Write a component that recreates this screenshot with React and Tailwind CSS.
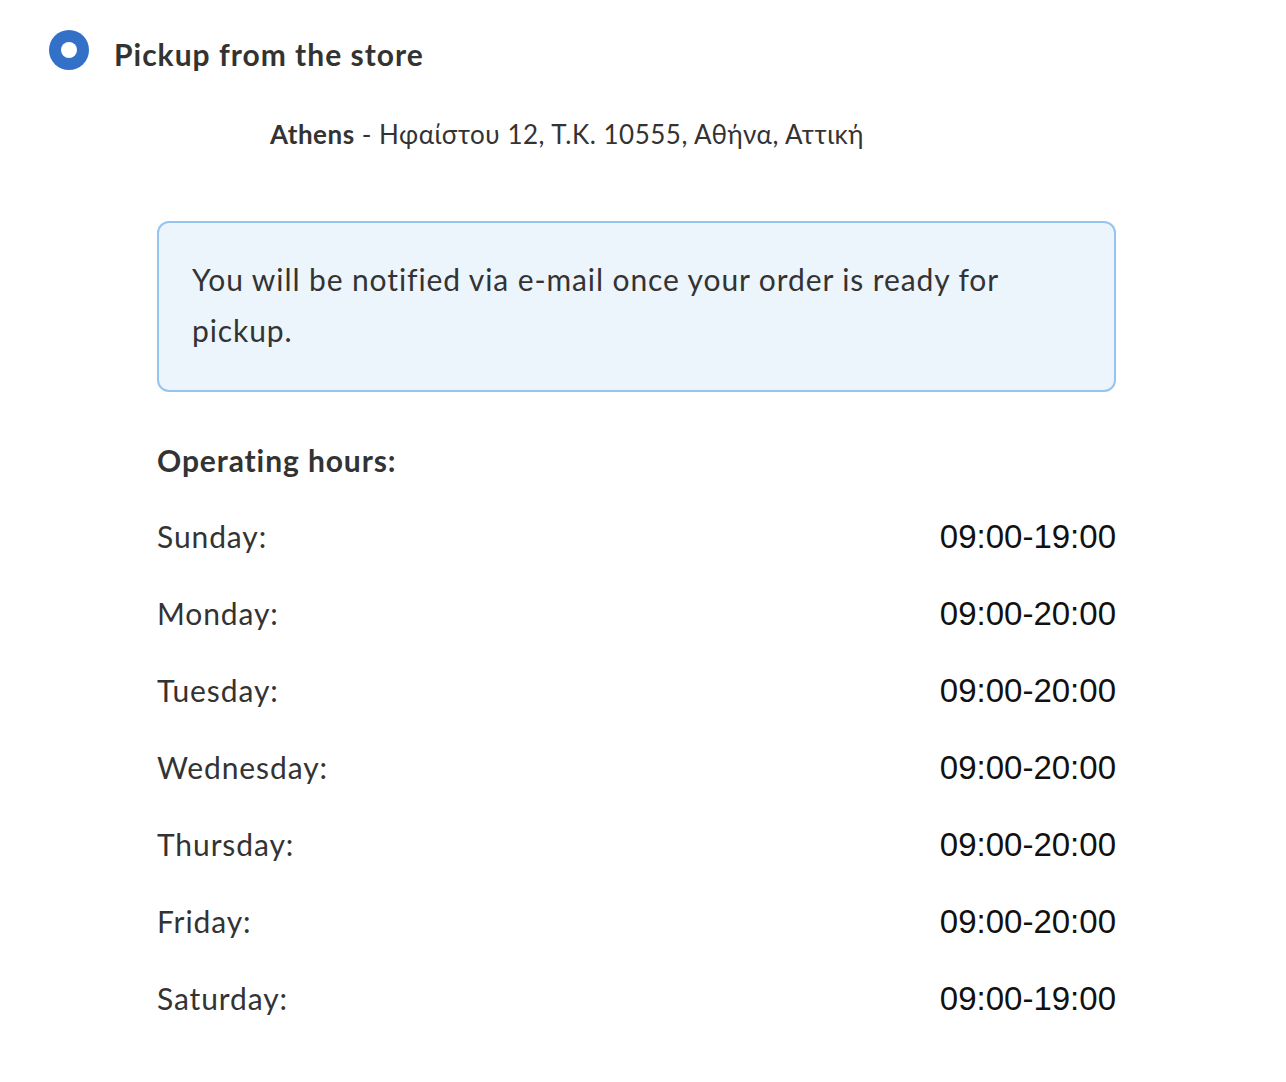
const hours = [
  ['Sunday:', '09:00-19:00'],
  ['Monday:', '09:00-20:00'],
  ['Tuesday:', '09:00-20:00'],
  ['Wednesday:', '09:00-20:00'],
  ['Thursday:', '09:00-20:00'],
  ['Friday:', '09:00-20:00'],
  ['Saturday:', '09:00-19:00'],
];

export default function App() {
  return (
    <div className="min-h-screen bg-white text-[#333] font-['Lato','Noto_Sans',sans-serif]">
      <div className="flex items-center pt-[30px] pl-[49px]">
        <span className="mb-[9px] flex h-10 w-10 items-center justify-center rounded-full bg-[#3371c9]">
          <span className="h-4 w-4 rounded-full bg-white" />
        </span>
        <span className="ml-[25px] text-[30px] font-bold tracking-[1px] text-[#333]">Pickup from the store</span>
      </div>

      <div className="ml-[157px] w-[959px]">
        <div className="mt-[36px] flex items-center text-[26px] tracking-[0.5px]">
          <span className="w-[113px] shrink-0" />
          <span className="font-bold">Athens</span>
          <span>&nbsp;- Ηφαίστου 12, Τ.Κ. 10555, Αθήνα, Αττική</span>
        </div>

        <div className="mt-[67px] rounded-xl border-2 border-[#95c4f1] bg-[#ecf4fc] px-[33px] pt-[31px] pb-[34px] text-[30px] leading-[51px] tracking-[0.9px]">
          You will be notified via e-mail once your order is ready for
          <br />
          pickup.
        </div>

        <div className="mt-[46px] text-[30px] font-bold tracking-[0.9px]">Operating hours:</div>

        <div className="mt-[33px] flex flex-col gap-[36px]">
          {hours.map(([day, time]) => (
            <div key={day} className="flex items-baseline justify-between leading-[40px]">
              <span className="text-[30px] tracking-[0.9px]">{day}</span>
              <span className="font-['Liberation_Sans',sans-serif] text-[33px] text-[#111]">{time}</span>
            </div>
          ))}
        </div>
      </div>
    </div>
  );
}
